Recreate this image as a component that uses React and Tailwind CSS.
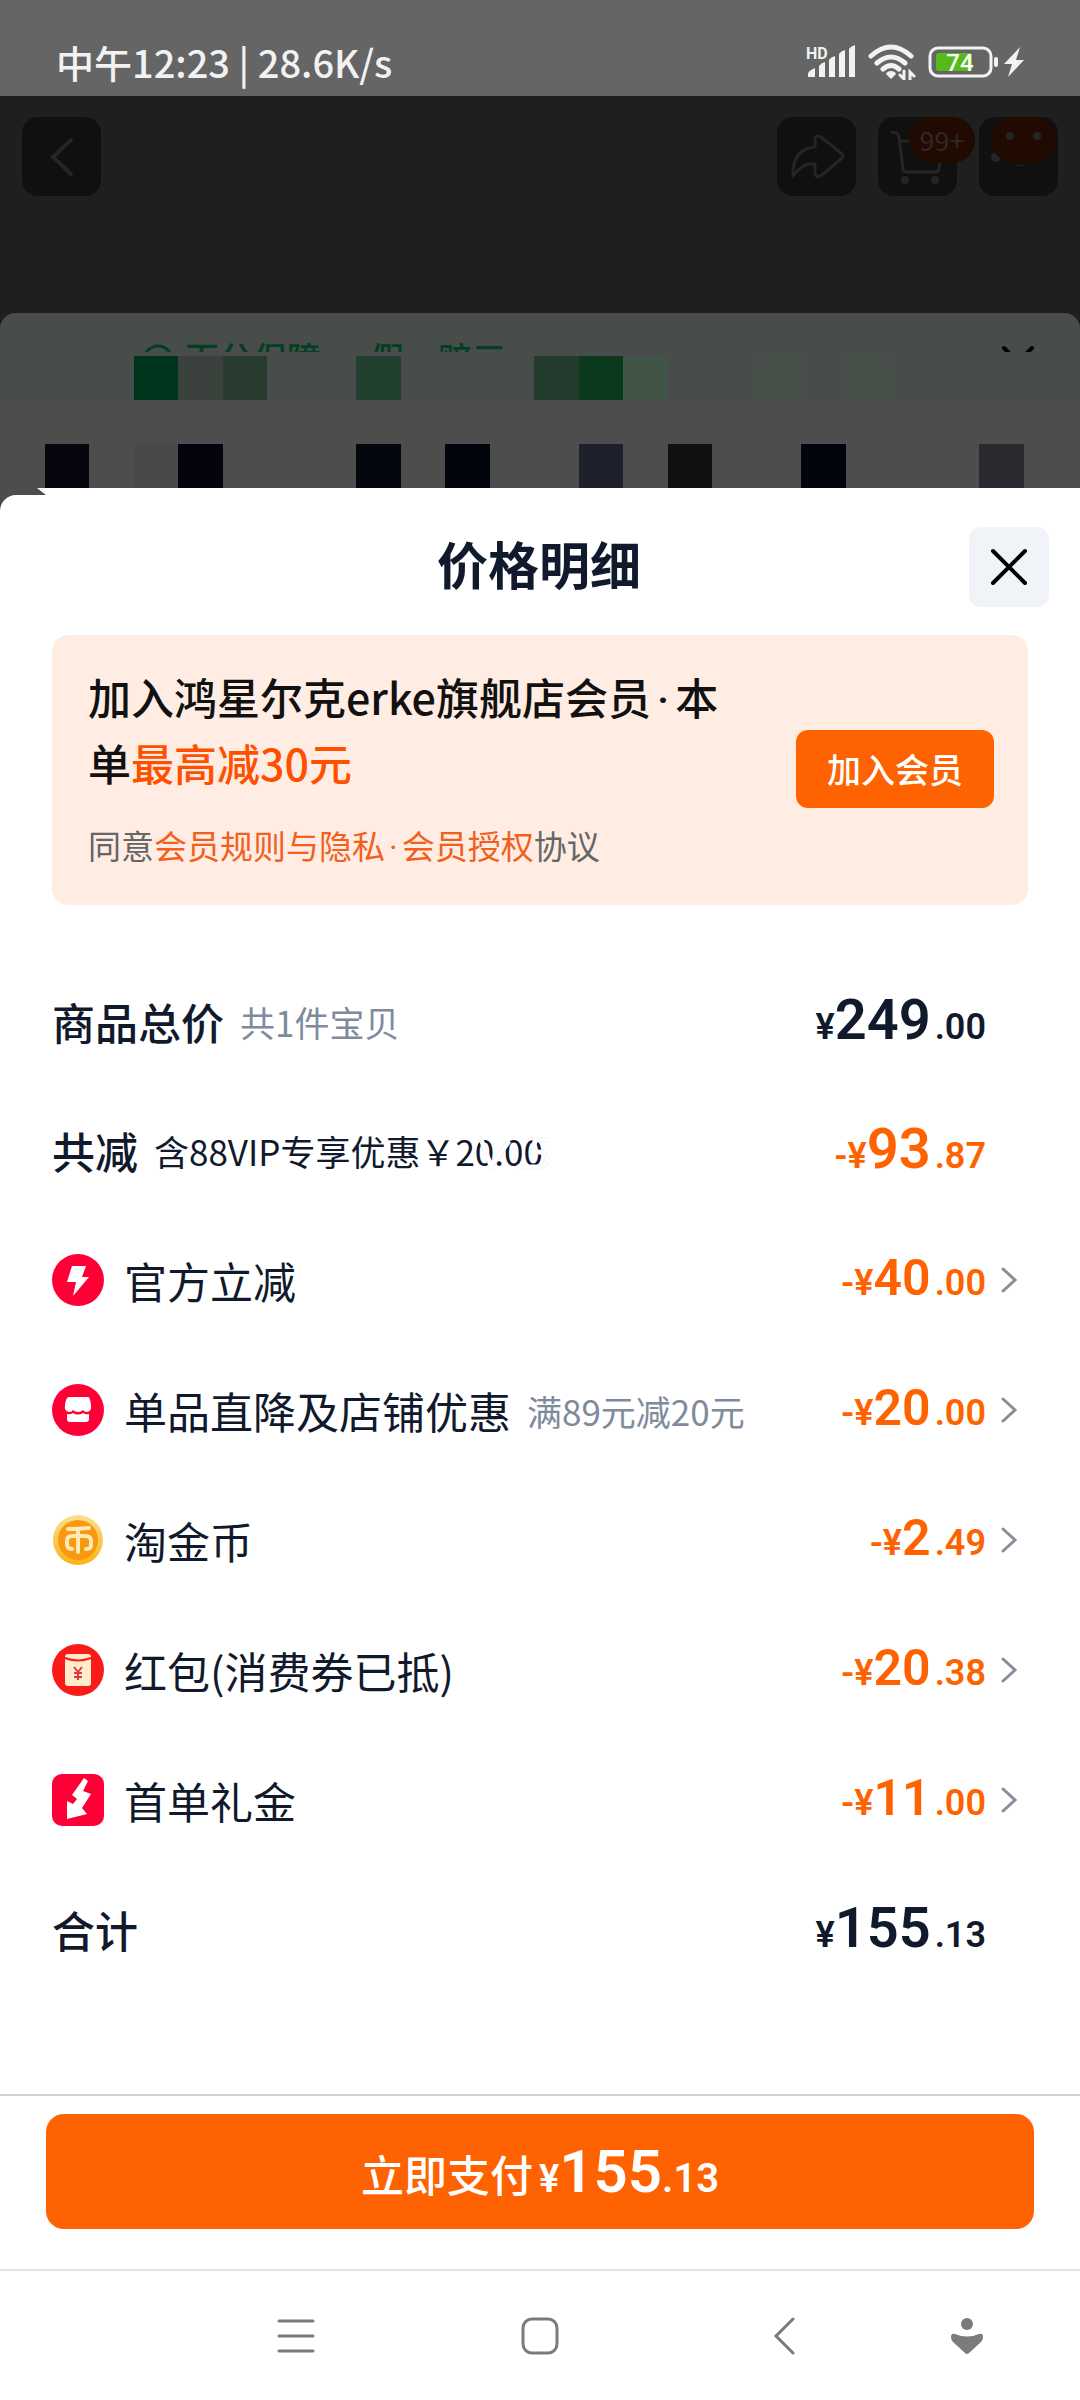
import React, { useState } from 'react'

const deductions = [
  { id: 'official', icon: 'bolt', label: '官方立减', whole: '40', cents: '00' },
  { id: 'shop', icon: 'shop', label: '单品直降及店铺优惠', note: '满89元减20元', whole: '20', cents: '00' },
  { id: 'coin', icon: 'coin', label: '淘金币', whole: '2', cents: '49' },
  { id: 'packet', icon: 'packet', label: '红包(消费券已抵)', whole: '20', cents: '38' },
  { id: 'gift', icon: 'gift', label: '首单礼金', whole: '11', cents: '00' }
]

// one entry per tile, '' leaves the tile empty
const tilesTop = [
  '', '', '', 'bg-[#00351d]', 'bg-[#3b413c]', 'bg-[#283b2f]', '', '', 'bg-[#22402e]', '', '', '',
  'bg-[#243c2d]', 'bg-[#0a391c]', 'bg-[#415547]', '', '', 'bg-[#465048]', '', 'bg-[#465049]', '', '', '', ''
]
const tilesBottom = [
  '', 'bg-[#07050d]', '', 'bg-[#494949]', 'bg-[#04040f]', '', '', '', 'bg-[#03060c]', '', 'bg-[#02040e]', '',
  '', 'bg-[#1e212b]', '', 'bg-[#101212]', '', '', 'bg-[#02040d]', '', '', '', 'bg-[#2a292f]', ''
]

const Tiles = ({ tiles }) => (
  <div className="grid grid-cols-24 pr-3">
    {tiles.map((color, i) => (
      <div key={i} className={`h-11 ${color}`} />
    ))}
  </div>
)

const StatusBar = () => (
  <div className="flex h-24 items-center justify-between bg-[#656565] pt-[28px] pr-14 pl-[56px] text-[#f2f2f2]">
    <span className="text-[38px] leading-none font-medium">中午12:23 | 28.6K/s</span>
    <div className="flex items-center gap-3">
      <svg width="50" height="34" viewBox="0 0 50 34" fill="currentColor">
        <text x="0" y="14" fontSize="16" fontWeight="700" fontFamily="Roboto, sans-serif">HD</text>
        <path d="M2 32v-3q0-3 7-6v9zM13 32V21q2-3 6-4v15zM23 32V15q2-3 6-4v21zM33 32V9q2-3 6-4v27zM43 32V4q2-3 6-4v32z" />
      </svg>
      <svg width="48" height="36" viewBox="0 0 48 36" fill="none" stroke="currentColor" strokeWidth="5" strokeLinecap="round">
        <path d="M3 12q20-18 40 0M9 19q14-12 28 0M15 25q8-7 16 0" />
        <path d="M23 27q4 0 5 3l-5 5-5-5q1-3 5-3z" fill="currentColor" stroke="none" />
        <path d="M36 27v8l-4-4M42 36v-8l4 4" strokeWidth="3" />
      </svg>
      <div className="flex items-center gap-1.5">
        <svg width="70" height="32" viewBox="0 0 70 32">
          <rect x="2" y="2" width="61" height="28" rx="8" fill="none" stroke="currentColor" strokeWidth="3" />
          <rect x="8" y="7" width="36" height="18" rx="3" fill="#54bb1a" />
          <rect x="66" y="11" width="4" height="10" rx="2" fill="currentColor" />
          <text x="32" y="25" textAnchor="middle" fontSize="24" fontWeight="500" fontFamily="Roboto, sans-serif" fill="#fff">74</text>
        </svg>
        <svg width="20" height="30" viewBox="0 0 20 30" fill="currentColor">
          <path d="M16 0 0 17h8L4 30l16-17h-8z" />
        </svg>
      </div>
    </div>
  </div>
)

const TopButton = ({ label, children }) => (
  <button type="button" aria-label={label} className="relative size-[79px] rounded-2xl bg-[#101010] text-[#252525]">
    {children}
  </button>
)

const ShopHeader = () => (
  <div className="flex h-[217px] items-start justify-between bg-[#1f1f1f] px-[22px] pt-[21px]">
    <TopButton label="返回">
      <svg width="79" height="79" fill="none" stroke="currentColor" strokeWidth="4" strokeLinecap="round">
        <path d="M49 23 31 40l18 17" />
      </svg>
    </TopButton>
    <div className="flex gap-[22px]">
      <TopButton label="分享">
        <svg width="79" height="79" fill="none" stroke="currentColor" strokeWidth="3" strokeLinejoin="round">
          <path d="M16 59Q15 32 38 30v-8q1-5 6-2l21 17q2 2 0 4L45 58q-7 4-7-3v-8q-12-2-22 12z" />
        </svg>
      </TopButton>
      <TopButton label="购物车">
        <svg width="79" height="79" fill="none" stroke="currentColor" strokeWidth="3" strokeLinecap="round">
          <path d="M14 15q6 0 7 5l4 32q0 3 4 3h28q4 0 4-4l3-25M23 24h8" />
          <circle cx="27" cy="63" r="4" fill="currentColor" stroke="none" />
          <circle cx="57" cy="63" r="4" fill="currentColor" stroke="none" />
        </svg>
        <span className="absolute top-0 -right-[18px] flex h-[46px] w-[66px] items-center justify-center rounded-full bg-[#200a02] text-[27px] text-[#332724]">
          99+
        </span>
      </TopButton>
      <TopButton label="更多">
        <svg width="79" height="79" fill="currentColor">
          <circle cx="17" cy="40" r="5" />
          <rect x="12" width="65" height="46" rx="23" fill="#200a02" />
          <circle cx="31" cy="19" r="4" />
          <circle cx="58" cy="19" r="4" />
          <rect x="36" y="48" width="8" height="1" />
        </svg>
      </TopButton>
    </div>
  </div>
)

const Backdrop = () => (
  <div className="bg-[#1f1f1f]">
    <div className="overflow-hidden rounded-t-2xl bg-[#4d4d4d]">
      <div className="bg-[#484c4a] pt-[30px]">
        <div className="flex h-[9px] items-start justify-between overflow-hidden pr-11 pl-[143px]">
          <div className="flex items-start gap-3 text-[#023f22]">
            <svg width="30" height="30" fill="none" stroke="currentColor" strokeWidth="3">
              <circle cx="15" cy="17" r="14" />
            </svg>
            <span className="text-[34px] leading-[30px] font-medium">百分保障 · 假一赔三</span>
          </div>
          <svg width="36" height="36" fill="none" stroke="#000" strokeWidth="4" strokeLinecap="round">
            <path d="m4 5 28 28M32 5 4 33" />
          </svg>
        </div>
        <div className="pt-1">
          <Tiles tiles={tilesTop} />
        </div>
      </div>
      <div className="pt-11">
        <Tiles tiles={tilesBottom} />
      </div>
      <div className="ml-[37px] h-[7px] bg-white [clip-path:polygon(0_0,100%_0,100%_100%,9px_100%)]" />
      <div className="h-4 rounded-tl-2xl bg-white" />
    </div>
  </div>
)

const RowIcon = ({ name }) => {
  if (name === 'bolt') {
    return (
      <svg width="52" height="52" viewBox="0 0 52 52" className="shrink-0">
        <circle cx="26" cy="26" r="26" fill="#ff0036" />
        <path d="M20 12h14l-4 11h7L21 42l3-14h-9z" fill="#fff" />
      </svg>
    )
  }
  if (name === 'shop') {
    return (
      <svg width="52" height="52" viewBox="0 0 52 52" className="shrink-0">
        <circle cx="26" cy="26" r="26" fill="#ff0036" />
        <path d="M17 13h19q2 0 3 8 1 6-4 7-3 0-4-2-2 2-5 2t-5-2q-1 2-4 2-5-1-4-7 1-8 4-8z" fill="#fff" />
        <path d="M15 30q3 1 6-1 5 3 10 0 3 2 6 1v5q0 3-3 3H18q-3 0-3-3z" fill="#fff" />
      </svg>
    )
  }
  if (name === 'coin') {
    return (
      <svg width="52" height="52" viewBox="0 0 52 52" className="shrink-0">
        <defs>
          <linearGradient id="coinRim" x1="0" y1="0" x2="0" y2="1">
            <stop offset="0" stopColor="#fbe08d" />
            <stop offset="1" stopColor="#fcb316" />
          </linearGradient>
        </defs>
        <circle cx="26" cy="26" r="25" fill="url(#coinRim)" />
        <circle cx="26" cy="26" r="20" fill="#f8990f" />
        <g fill="none" stroke="#ffe9b4" strokeWidth="4" strokeLinecap="round">
          <path d="M16 15q10 0 21-1M26 15v23" />
          <path d="M26 22h-6q-5 0-5 5v3q0 5 5 5M26 22h7q6 0 6 5v4q0 4-5 4" />
        </g>
      </svg>
    )
  }
  if (name === 'packet') {
    return (
      <svg width="52" height="52" viewBox="0 0 52 52" className="shrink-0">
        <circle cx="26" cy="26" r="26" fill="#fb1a1a" />
        <rect x="13" y="10" width="26" height="32" rx="3" fill="#ffeccb" />
        <path d="M13 14q13 5 26 0" fill="none" stroke="#fb1a1a" strokeWidth="2" />
        <path d="m22 23 4 5 4-5M26 28v8M22 29h8M22 33h8" fill="none" stroke="#e8343c" strokeWidth="2" />
      </svg>
    )
  }
  return (
    <svg width="52" height="52" viewBox="0 0 52 52" className="shrink-0">
      <rect width="52" height="52" rx="10" fill="#ff0036" />
      <path d="m32 4 4 3-5 10 8 3-9 14 5 6-20 5V27l6 3 4-5-5-4z" fill="#fff" />
    </svg>
  )
}

const Amount = ({ minus, whole, cents, large }) => (
  <span className="ml-auto flex items-baseline pb-1 font-[Roboto,sans-serif] text-[36px] leading-none font-semibold whitespace-nowrap">
    {minus && <span>-</span>}
    <span>¥</span>
    <span className={large ? 'text-[56px]' : 'text-[50px]'}>{whole}</span>
    <span className="ml-1">.{cents}</span>
  </span>
)

const SummaryRow = ({ label, children, whole, cents, minus }) => (
  <div className={`flex h-[129px] items-center pr-[42px] ${minus ? 'text-[#ff6200]' : ''}`}>
    <span className="text-[43px] leading-none font-medium text-[#111a2c]">{label}</span>
    {children}
    <Amount minus={minus} whole={whole} cents={cents} large />
  </div>
)

const App = () => {
  const [open, setOpen] = useState(null)

  return (
    <div className="flex min-h-screen flex-col bg-white font-['Noto_Sans_CJK_SC',sans-serif] text-[#111a2c]">
      <StatusBar />
      <ShopHeader />
      <Backdrop />

      <main className="grow px-[52px]">
        <div className="-mr-[21px] flex items-center pt-4">
          <h1 className="grow pb-2 pl-[57px] text-center text-[51px] leading-none font-bold">价格明细</h1>
          <button type="button" aria-label="关闭" className="flex size-20 items-center justify-center rounded-xl bg-[#f0f4f8]">
            <svg width="38" height="38" fill="none" stroke="#000" strokeWidth="4" strokeLinecap="round">
              <path d="m3 3 32 32M35 3 3 35" />
            </svg>
          </button>
        </div>

        <section className="mt-7 flex items-center gap-[60px] rounded-2xl bg-[#ffede3] pt-7 pb-[30px] pr-[34px] pl-9">
          <div className="flex-1 pb-1.5">
            <p className="text-[43px] leading-[66px] font-medium text-[#111]">
              加入鸿星尔克erke旗舰店会员<span className="mx-1.5 font-[Roboto,sans-serif] leading-none">·</span>本单
              <span className="text-[#ff5000]">最高减30元</span>
            </p>
            <p className="mt-[26px] text-[33px] leading-[48px] text-[#666]">
              同意
              <a href="#rules" className="text-[#f2601d]">会员规则与隐私</a>
              <span className="mx-1 font-[Roboto,sans-serif] leading-none text-[#f2601d]">·</span>
              <a href="#auth" className="text-[#f2601d]">会员授权</a>
              协议
            </p>
          </div>
          <button type="button" className="h-[78px] w-[198px] rounded-xl bg-[#ff6200] text-[34px] leading-none font-medium text-white">
            加入会员
          </button>
        </section>

        <section className="mt-[52px]">
          <SummaryRow label="商品总价" whole="249" cents="00">
            <span className="ml-4 text-[35px] leading-none text-[#7f8b9d]">共1件宝贝</span>
          </SummaryRow>
          <SummaryRow label="共减" whole="93" cents="87" minus>
            <span className="relative ml-4 text-[35px] leading-none text-[#111a2c]">
              含88VIP专享优惠￥20.00
              {/* faint leftover mark lying over the amount */}
              <svg width="90" height="34" viewBox="0 0 90 34" fill="none" className="absolute top-1 -right-3">
                <g stroke="#f3f4f7" strokeWidth="5">
                  <path d="m16 2 10 27L44 4M52 30h20q12-2 10-10-2-6-14-5l2-12h14" />
                </g>
                <g stroke="#fff" strokeWidth="3">
                  <path d="m16 2 10 27L44 4M52 30h20q12-2 10-10-2-6-14-5l2-12h14" />
                </g>
              </svg>
            </span>
          </SummaryRow>

          {deductions.map(row => (
            <button
              key={row.id}
              type="button"
              aria-expanded={open === row.id}
              onClick={() => setOpen(open === row.id ? null : row.id)}
              className="flex h-[130px] w-full items-center text-left"
            >
              <RowIcon name={row.icon} />
              <span className="ml-5 text-[43px] leading-none">{row.label}</span>
              {row.note && <span className="ml-4 text-[35px] leading-none text-[#7f8b9d]">{row.note}</span>}
              <span className="ml-auto text-[#ff6200]">
                <Amount minus whole={row.whole} cents={row.cents} />
              </span>
              <svg width="42" height="26" fill="none" stroke="#8a8d99" strokeWidth="3" strokeLinecap="round">
                <path d="m17 2 12 11-12 11" />
              </svg>
            </button>
          ))}

          <SummaryRow label="合计" whole="155" cents="13" />
        </section>
      </main>

      <footer className="border-t-2 border-[#cfcfcf] px-[46px] pt-[18px] pb-10">
        <button
          type="button"
          className="flex h-[115px] w-full items-center justify-center rounded-[18px] bg-[#ff6200] text-white"
        >
          <span className="flex items-baseline leading-none font-semibold">
            <span className="text-[43px] font-medium">立即支付</span>
            <span className="ml-1.5 font-[Roboto,sans-serif] text-[38px]">¥</span>
            <span className="font-[Roboto,sans-serif] text-[60px]">155</span>
            <span className="font-[Roboto,sans-serif] text-[40px]">.13</span>
          </span>
        </button>
      </footer>

      <nav className="grid h-[131px] grid-cols-[174fr_244fr_244fr_244fr_122fr_52fr] items-center border-t-2 border-[#e2e2e2] text-[#7b7b7b]">
        <button type="button" aria-label="最近任务" className="col-start-2 flex justify-center">
          <svg width="38" height="38" stroke="currentColor" strokeWidth="3" strokeLinecap="round">
            <path d="M2 4h34M2 19h34M2 34h34" />
          </svg>
        </button>
        <button type="button" aria-label="主屏幕" className="flex justify-center">
          <svg width="38" height="38" fill="none" stroke="currentColor" strokeWidth="3">
            <rect x="2" y="2" width="34" height="34" rx="9" />
          </svg>
        </button>
        <button type="button" aria-label="返回上一页" className="flex justify-center">
          <svg width="22" height="38" fill="none" stroke="currentColor" strokeWidth="3" strokeLinecap="round">
            <path d="M20 2 3 19l17 17" />
          </svg>
        </button>
        <button type="button" aria-label="无障碍" className="flex justify-center">
          <svg width="34" height="38" fill="currentColor">
            <circle cx="17" cy="7" r="6" />
            <path d="M1 20q0-4 4-3 12 5 24 0 4-1 4 3 0 3-2 5L19 36q-2 2-4 0L3 25q-2-2-2-5z" />
          </svg>
        </button>
      </nav>
    </div>
  )
}

export default App
